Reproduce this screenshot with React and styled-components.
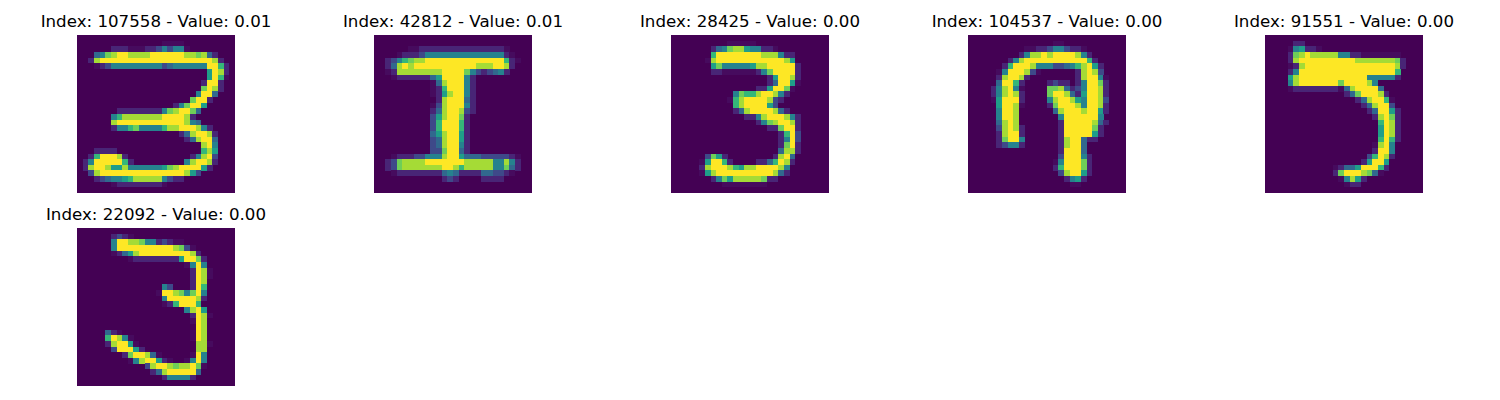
import React from 'react'
import styled, { createGlobalStyle } from 'styled-components'

// viridis steps, "," is the barely visible one just above the background
const viridis = {
  ',': '#460b5e',
  1: '#482576',
  2: '#3e4989',
  3: '#31688e',
  4: '#26828e',
  5: '#1f9e89',
  6: '#35b779',
  7: '#6ece58',
  8: '#a5db36',
  9: '#fde725',
}

// each row is "startColumn:values", "." skips a cell, spaces only group for counting
const samples = [
  {
    index: 107558,
    value: '0.01',
    rows: {
      1: '15:,,,,',
      2: '6:111,,,1124244,',
      3: '3:3478998888999999887831',
      4: '2:18 99999 99999 99999 99999 81',
      5: '3:,12 44444 4444 23 444444 9961',
      6: '23:5981',
      7: '23:596,',
      8: '22:1991',
      9: '22:7981',
      10: '21:4993',
      11: '20:7991',
      12: '17:147995',
      13: '7:11111111 4789973',
      14: '6:46 8888888 9999 81',
      15: '6:8 999999999999 843',
      16: '6:144674444688999841',
      17: '18:1389981',
      18: '19:138993',
      19: '22:894',
      20: '3:1111 ............... 685',
      21: '2:1699981 ........... 14892',
      22: '1:149999961 ......... 489981',
      23: '1:18998558444444578999951',
      24: '2:28 999999999999999 852',
      25: '3:1234456 88888 4211',
      26: '6:,11111111,',
    },
  },
  {
    index: 42812,
    value: '0.01',
    rows: {
      2: '6:,, 1 11111 11111 1111 ,',
      3: '4:,1112 44444 44444 4444 1,',
      4: '2:1246788 99999 99999 9999 61,',
      5: '2:13898 99999 999999 888 99 81',
      6: '2:,18 8888888 9999 7421 2341',
      7: '3:,1 11111 35 9999 41',
      8: '10:,3899941',
      9: '10:,1699941',
      10: '10:,1589941',
      11: '11:1899931',
      12: '10:,2899941',
      13: '10:13899821',
      14: '10:2589971',
      15: '10:2699961',
      16: '10:2699961',
      17: '10:3589951',
      18: '10:2389951',
      19: '10:2389941',
      20: '10:2279931',
      21: '3:,11122 444 899 5333 22222 1,',
      22: '2:127 8888 9999999 88888 44 841',
      23: '2:127 8888888 9986 88888 44 731',
      24: '3:, 11111111 343 1111 33221,',
      25: '12:121....1111',
    },
  },
  {
    index: 28425,
    value: '0.00',
    rows: {
      1: '10:,,,,,',
      2: '7:134788544 11,',
      3: '7:6 99999999 888 411',
      4: '6:,8 999999999999 85',
      5: '7:57 44444 588 99999 1',
      6: '7:11 ,,,,,, 147 9999 1',
      7: '17:159981',
      8: '17:13995,',
      9: '15:115997,',
      10: '11:4766899841',
      11: '10:,68 9999 821',
      12: '11:68 9999 52',
      13: '11:138 9999 831',
      14: '13:1148 999 841',
      15: '15:14789981',
      16: '17:117991',
      17: '19:1692',
      18: '19:1492',
      19: '19:1791',
      20: '19:3881',
      21: '6:2751 ........ 1893',
      22: '5:,59961 .... 113 6981',
      23: '5:18 999 86588 9999 84',
      24: '5:,58 9999999999 831',
      25: '7:1475 88888 711',
      26: '9:,,,,,,,,',
    },
  },
  {
    index: 104537,
    value: '0.00',
    rows: {
      1: '15:,,',
      2: '10:,,112 442 11,',
      3: '9:148898 9999 841',
      4: '7:148 99999999999 61',
      5: '6:16 999 8 444 22 3 4 6 8 9 5 1',
      6: '5:,4 999 82, ...... 18982',
      7: '5:18998 1 ........ 18994,',
      8: '5:39961 .... 1211 . 149971',
      9: '4:14894, .... 7783 12499 81',
      10: '4:148981 .... 7998 3 1 5 9981',
      11: '4:,59991 .... 489985 4 9982',
      12: '5:5998, .... 17 999 8 4 9981',
      13: '5:4998 ...... 38 999 8 99 51',
      14: '5:4998 ....... 4 999999 4',
      15: '5:3898 ....... 1 99999 831',
      16: '5:28981 ...... 1 99999 71',
      17: '5:18991 ...... 1 99999 51',
      18: '5:17994 ...... 1 8 99 311',
      19: '5:12441 ...... 18993',
      20: '16:19993',
      21: '16:299941',
      22: '15:,499971',
      23: '15:1699971',
      24: '16:289951',
      25: '17:1451',
      26: '18:,,',
    },
  },
  {
    index: 91551,
    value: '0.00',
    rows: {
      1: '5:11',
      2: '4:,4511,',
      3: '4:178988888 44 11 ,,,,,,,',
      4: '4:18 9999999999 8 888888 71',
      5: '4:,18 9999999999999999 81',
      6: '4:14 99999999999999999 6',
      7: '4:58 999999999999 44444 1',
      8: '4:48 9999999 7 9999 84',
      9: '4:, 11111111 , 38 9999 3',
      10: '14:137 999 81',
      11: '16:138996,',
      12: '17:138992',
      13: '18:139951',
      14: '19:18971',
      15: '20:6981',
      16: '20:5981',
      17: '20:5981',
      18: '20:6961',
      19: '19:,894',
      20: '19:1994',
      21: '18:26981',
      22: '17:15995',
      23: '12:,13359 9961',
      24: '12:17999873,',
      25: '13:,4851',
      26: '14:,11',
    },
  },
  {
    index: 22092,
    value: '0.00',
    rows: {
      1: '6:121,',
      2: '6:49988 7 44 121,,',
      3: '6:4 9999999999 872,',
      4: '6:,1358 999999999 81',
      5: '9:,1 1111111 59971',
      6: '19:,494',
      7: '20:198,',
      8: '20:198,',
      9: '20:198',
      10: '15:42...196',
      11: '14:,99874 794',
      12: '15:4 99999 81',
      13: '15:,16 999 6',
      14: '19:4895',
      15: '20:198,',
      16: '20:,98',
      17: '21:98',
      18: '5:31, ............ ,98',
      19: '5:6984, .......... ,98',
      20: '5:18995, .......... 88,',
      21: '6:299951 ......... 88',
      22: '8:179983, ..... ,94',
      23: '9:,489951, .. ,494',
      24: '12:28998 7889 7,',
      25: '13:138 99999 3',
      26: '15:144441',
    },
  },
]

const GlobalStyle = createGlobalStyle`
  html,
  body {
    margin: 0;
    background: #fff;
  }
`

const Figure = styled.div`
  width: 1500px;
  height: 400px;
  padding: 8px 0 0 7.5px;
  box-sizing: border-box;
  display: grid;
  grid-template-columns: repeat(5, 297px);
  grid-auto-rows: 193px;
  font-family: 'DejaVu Sans', sans-serif;
  overflow: hidden;
`

const Panel = styled.div`
  display: flex;
  flex-direction: column;
  align-items: center;
`

const Title = styled.div`
  height: 27px;
  line-height: 27px;
  font-size: 16.67px;
  color: #000;
  white-space: nowrap;
`

const Digit = styled.svg`
  display: block;
  width: 158px;
  height: 158px;
  background: #440154;
`

const parseRows = (rows) => {
  const cells = []
  Object.entries(rows).forEach(([y, row]) => {
    const [start, values] = row.split(':')
    const digits = values.replace(/ /g, '')
    digits.split('').forEach((v, i) => {
      if (viridis[v]) cells.push({ x: Number(start) + i, y: Number(y), fill: viridis[v] })
    })
  })
  return cells
}

const App = () => {
  return (
    <>
      <GlobalStyle />
      <Figure>
        {samples.map((s) => (
          <Panel key={s.index}>
            <Title>
              Index: {s.index} - Value: {s.value}
            </Title>
            <Digit viewBox="0 0 28 28" shapeRendering="crispEdges">
              {parseRows(s.rows).map((c) => (
                <rect key={`${c.x}-${c.y}`} x={c.x} y={c.y} width="1.02" height="1.02" fill={c.fill} />
              ))}
            </Digit>
          </Panel>
        ))}
      </Figure>
    </>
  )
}

export default App
